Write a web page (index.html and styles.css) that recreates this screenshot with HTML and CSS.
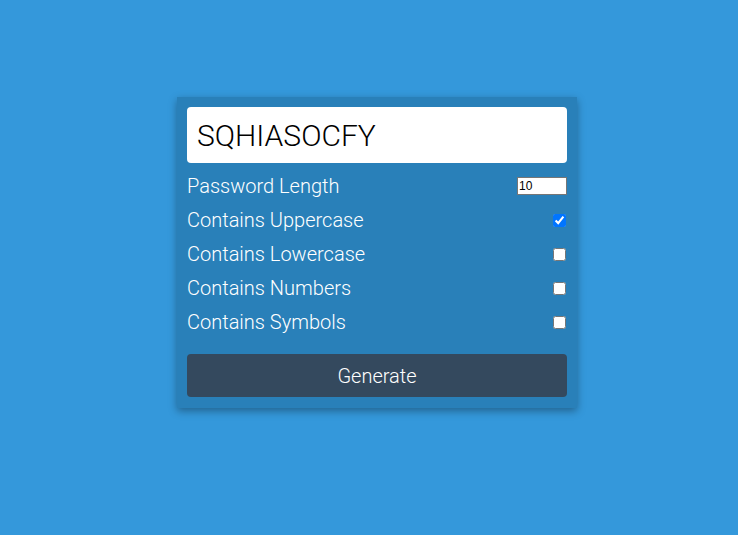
FILE: index.html
```html
<!DOCTYPE html>
<html>
<head>
<meta charset="utf-8">
<link rel="stylesheet" href="styles.css">
</head>
<body>
<div class="page">
  <div class="card">
    <div class="result">SQHIASOCFY</div>
    <div class="setting"><label>Password Length</label><input class="num" type="number" value="10"></div>
    <div class="setting"><label>Contains Uppercase</label><input type="checkbox" checked></div>
    <div class="setting"><label>Contains Lowercase</label><input type="checkbox"></div>
    <div class="setting"><label>Contains Numbers</label><input type="checkbox"></div>
    <div class="setting"><label>Contains Symbols</label><input type="checkbox"></div>
    <button class="btn">Generate</button>
  </div>
</div>
</body>
</html>
```
FILE: styles.css
```css
* { box-sizing: border-box; }
html, body { margin: 0; height: 100%; }
body { background: #3498db; font-family: Roboto, "Noto Sans", sans-serif; color: #fff; }
.page { height: 535px; display: flex; align-items: center; justify-content: center; padding: 0 0 30px 16px; }
.card { width: 400px; background: #2980b9; padding: 10px 10px 11px; box-shadow: 0 3px 8px rgba(0,0,0,0.35); }
.result { background: #fff; color: #000; border-radius: 4px; height: 56px; display: flex; align-items: center; padding-left: 10px; font-size: 30px; font-weight: 300; margin-bottom: 6px; }
.setting { display: flex; justify-content: space-between; align-items: center; height: 34px; font-size: 20px; font-weight: 300; }
.setting input[type=checkbox] { margin: 0 1px 0 0; width: 13px; height: 13px; }
.num { width: 50px; height: 18px; font-size: 12px; padding: 0 1px; border: 1px solid #767676; font-family: Arial, "Liberation Sans", sans-serif; }
.btn { display: block; width: 100%; margin-top: 15px; height: 43px; background: #34495e; color: #fff; border: none; border-radius: 4px; font-family: Roboto, sans-serif; font-size: 20px; font-weight: 300; }
```
